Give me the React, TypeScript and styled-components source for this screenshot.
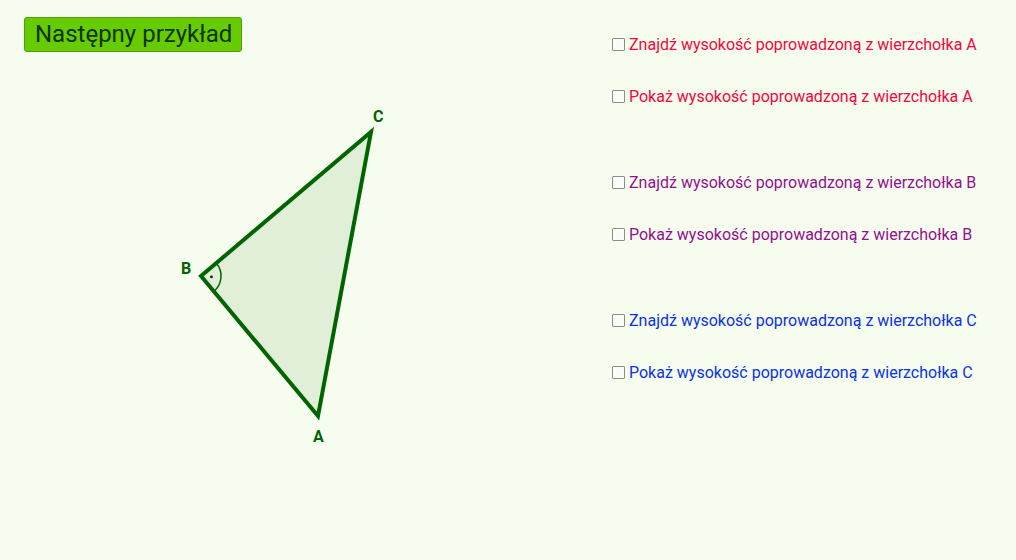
import React from "react";
import styled, { createGlobalStyle } from "styled-components";

const GlobalStyle = createGlobalStyle`
    html, body {
        margin: 0;
        padding: 0;
        background: #f7fdee;
    }
    body {
        font-family: Roboto, "Noto Sans", sans-serif;
    }
`;

const Page = styled.div`
    display: flex;
    width: 1016px;
    height: 560px;
    background: #f7fdee;
    overflow: hidden;
`;

const Board = styled.div`
    display: flex;
    flex-direction: column;
    width: 600px;
`;

const NextButton = styled.button`
    align-self: flex-start;
    margin: 17px 0 0 24px;
    height: 35px;
    padding: 0 9px 0 10px;
    background: #66cc00;
    border: 1px solid #4f9e0a;
    border-radius: 3px;
    color: #0e3300;
    font-family: Roboto, sans-serif;
    font-size: 24px;
    line-height: 33px;
    cursor: pointer;
`;

const Canvas = styled.svg`
    display: block;
    margin-top: 8px;
`;

const VertexLabel = styled.text`
    fill: #006400;
    font-family: Roboto, sans-serif;
    font-weight: bold;
    font-size: 16px;
`;

const Tasks = styled.div`
    display: flex;
    flex-direction: column;
    gap: 66px;
    padding: 34px 0 0 12px;
`;

const Group = styled.div`
    display: flex;
    flex-direction: column;
    gap: 32px;
`;

const Row = styled.label<{ $color: string }>`
    display: flex;
    align-items: center;
    gap: 4px;
    height: 20px;
    color: ${(p) => p.$color};
    font-family: Roboto, sans-serif;
    font-size: 16px;
    white-space: nowrap;
    cursor: pointer;
`;

const Box = styled.span`
    box-sizing: border-box;
    width: 13px;
    height: 13px;
    border: 1px solid #8a8f84;
    border-radius: 1px;
    background: #fbfcfa;
    flex-shrink: 0;
`;

const groups = [
    { vertex: "A", color: "#f5063d" },
    { vertex: "B", color: "#930f93" },
    { vertex: "C", color: "#0a32e6" },
];

// triangle vertices, page coordinates
const A = { x: 318, y: 416 };
const B = { x: 201, y: 276 };
const C = { x: 371, y: 132 };

function unit(from: { x: number; y: number }, to: { x: number; y: number }) {
    const dx = to.x - from.x;
    const dy = to.y - from.y;
    const len = Math.hypot(dx, dy);
    return { x: dx / len, y: dy / len };
}

const RightAngle: React.FC = () => {
    const r = 20;
    const u = unit(B, C);
    const v = unit(B, A);
    const p1 = { x: B.x + u.x * r, y: B.y + u.y * r };
    const p2 = { x: B.x + v.x * r, y: B.y + v.y * r };
    const bx = u.x + v.x;
    const by = u.y + v.y;
    const bl = Math.hypot(bx, by);
    const dot = { x: B.x + (bx / bl) * 10.5, y: B.y + (by / bl) * 10.5 };
    return (
        <g>
            <path
                d={`M ${p1.x} ${p1.y} A ${r} ${r} 0 0 1 ${p2.x} ${p2.y}`}
                fill="none"
                stroke="#006400"
                strokeWidth={1.5}
            />
            <circle cx={dot.x} cy={dot.y} r={1.4} fill="#003300" />
        </g>
    );
};

export default function App() {
    return (
        <>
            <GlobalStyle />
            <Page>
                <Board>
                    <NextButton>Następny przykład</NextButton>
                    <Canvas width={600} height={500} viewBox="0 60 600 500">
                        <polygon
                            points={`${A.x},${A.y} ${B.x},${B.y} ${C.x},${C.y}`}
                            fill="#e2efd8"
                            stroke="#006400"
                            strokeWidth={4}
                            strokeLinejoin="miter"
                        />
                        <RightAngle />
                        <VertexLabel x={373} y={122}>C</VertexLabel>
                        <VertexLabel x={181} y={274}>B</VertexLabel>
                        <VertexLabel x={313} y={442}>A</VertexLabel>
                    </Canvas>
                </Board>
                <Tasks>
                    {groups.map((g) => (
                        <Group key={g.vertex}>
                            <Row $color={g.color}>
                                <Box />
                                Znajdź wysokość poprowadzoną z wierzchołka {g.vertex}
                            </Row>
                            <Row $color={g.color}>
                                <Box />
                                Pokaż wysokość poprowadzoną z wierzchołka {g.vertex}
                            </Row>
                        </Group>
                    ))}
                </Tasks>
            </Page>
        </>
    );
}
